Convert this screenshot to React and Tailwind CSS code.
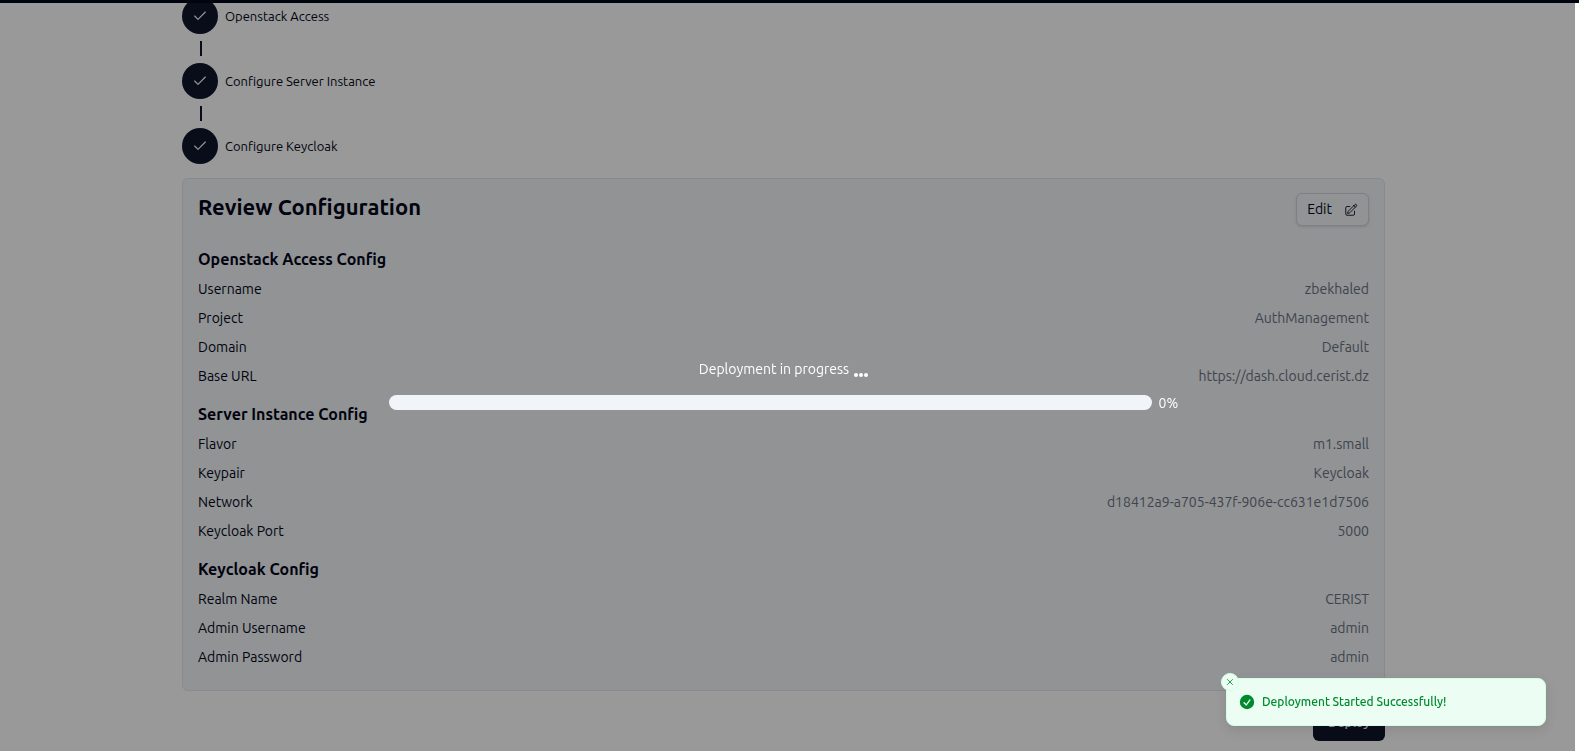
import { HiOutlinePencilSquare } from "react-icons/hi2";
import { LuCheck, LuX } from "react-icons/lu";

const steps = ["Openstack Access", "Configure Server Instance", "Configure Keycloak"];

const sections = [
  {
    title: "Openstack Access Config",
    rows: [
      ["Username", "zbekhaled"],
      ["Project", "AuthManagement"],
      ["Domain", "Default"],
      ["Base URL", "https://dash.cloud.cerist.dz"],
    ],
  },
  {
    title: "Server Instance Config",
    rows: [
      ["Flavor", "m1.small"],
      ["Keypair", "Keycloak"],
      ["Network", "d18412a9-a705-437f-906e-cc631e1d7506"],
      ["Keycloak Port", "5000"],
    ],
  },
  {
    title: "Keycloak Config",
    rows: [
      ["Realm Name", "CERIST"],
      ["Admin Username", "admin"],
      ["Admin Password", "admin"],
    ],
  },
];

function Stepper() {
  return (
    <ol className="-mt-[5px] flex flex-col">
      {steps.map((label, i) => (
        <li key={label}>
          <div className="flex items-center gap-[7px]">
            <span className="flex size-9 items-center justify-center rounded-full bg-slate-900 text-slate-50">
              <LuCheck className="size-4" strokeWidth={1.75} />
            </span>
            <span className="pt-0.5 text-[13px]">{label}</span>
          </div>
          {i < steps.length - 1 && <div className="my-[7px] ml-[18px] h-[15px] w-0.5 bg-slate-900" />}
        </li>
      ))}
    </ol>
  );
}

function Review() {
  return (
    <section className="mt-[14px] rounded-md border border-slate-200 bg-[#f2f5f8] px-[15px] pt-[14px] pb-[19px]">
      <div className="flex items-start justify-between">
        <h1 className="text-[22px] leading-7 font-bold">Review Configuration</h1>
        <button
          type="button"
          className="flex h-[33px] items-center gap-3 rounded-md border border-gray-300 bg-[#f2f5f8] px-[10px] pb-0.5 text-sm shadow-sm"
        >
          Edit
          <HiOutlinePencilSquare className="mt-0.5 size-[14px]" />
        </button>
      </div>
      <div className="mt-5 flex flex-col gap-[11px]">
        {sections.map((s) => (
          <div key={s.title}>
            <h2 className="h-7 text-base leading-[26px] font-bold">{s.title}</h2>
            <dl>
              {s.rows.map(([k, v]) => (
                <div key={k} className="flex h-[29px] items-center justify-between text-sm">
                  <dt>{k}</dt>
                  <dd className="text-gray-500">{v}</dd>
                </div>
              ))}
            </dl>
          </div>
        ))}
      </div>
    </section>
  );
}

function ProgressOverlay() {
  return (
    <div className="fixed inset-y-0 right-1 left-0 flex flex-col items-center justify-center bg-black/40 pt-5 pr-2 text-sm text-white">
      <div className="flex w-full flex-col items-center gap-[14px]">
        <div className="flex items-end gap-[5px]">
          <p>Deployment in progress</p>
          <span className="flex gap-px pb-0.5">
            <span className="size-1 rounded-full bg-white" />
            <span className="size-1 rounded-full bg-white" />
            <span className="size-1 rounded-full bg-white" />
          </span>
        </div>
        <div className="flex w-[50vw] items-center gap-[7px]">
          <div role="progressbar" aria-valuenow={0} aria-label="Deployment" className="h-[15px] grow rounded-full bg-slate-100" />
          <span>0%</span>
        </div>
      </div>
    </div>
  );
}

function Toast() {
  return (
    <div
      role="status"
      className="fixed right-[33px] bottom-[25px] flex h-12 w-80 items-center gap-[6px] rounded-lg border border-[#d3fde5] bg-[#ecfdf3] px-[11px] text-xs font-medium text-[#008a2e] shadow-[0_4px_12px_rgba(0,0,0,0.1)]"
    >
      <button
        type="button"
        aria-label="Close"
        className="absolute -top-[6px] -left-[6px] flex size-[18px] items-center justify-center rounded-full border border-[#d3fde5] bg-[#ecfdf3]"
      >
        <LuX className="size-[10px]" />
      </button>
      <svg viewBox="0 0 20 20" fill="currentColor" className="size-[18px]">
        <path
          fillRule="evenodd"
          d="M10 18a8 8 0 100-16 8 8 0 000 16zm3.857-9.809a.75.75 0 00-1.214-.882l-3.483 4.79-1.88-1.88a.75.75 0 10-1.06 1.061l2.5 2.5a.75.75 0 001.137-.089l4-5.5z"
          clipRule="evenodd"
        />
      </svg>
      <p>Deployment Started Successfully!</p>
    </div>
  );
}

export default function App() {
  return (
    <div className="h-screen overflow-hidden bg-white font-['Ubuntu','Noto_Sans',sans-serif] text-slate-950">
      <header className="relative z-10 h-[3px] bg-[#00040f]" />
      <main className="pr-3">
        <div className="mx-auto w-[1203px] max-w-full">
          <Stepper />
          <Review />
          <div className="mt-[14px] flex justify-end">
            <button type="button" className="h-9 rounded-md bg-slate-900 px-[15px] text-[13px] font-medium text-slate-50">
              Deploy
            </button>
          </div>
        </div>
      </main>
      <ProgressOverlay />
      <Toast />
    </div>
  );
}
